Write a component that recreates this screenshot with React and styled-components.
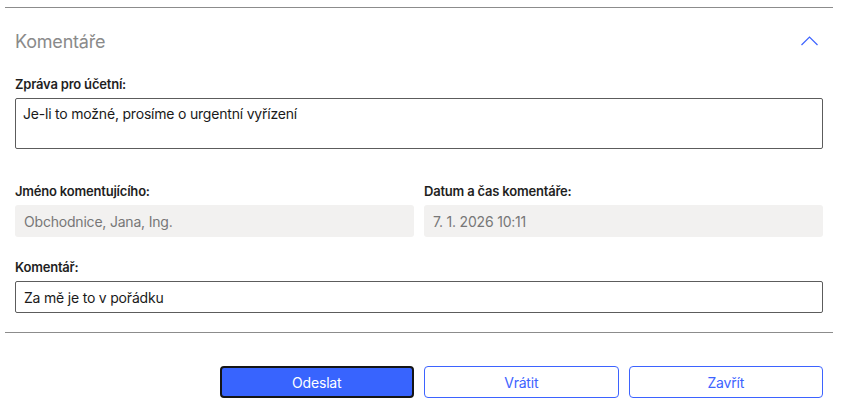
import React from "react";
import styled, { createGlobalStyle } from "styled-components";

const GlobalStyle = createGlobalStyle`
  html, body {
    margin: 0;
    padding: 0;
    background: #ffffff;
  }
  body {
    font-family: Inter, "Liberation Sans", Arial, sans-serif;
    color: #1a1a1a;
  }
`;

const ChevronUp = () => (
  <svg width="17" height="10" viewBox="0 0 17 10" fill="none">
    <polyline
      points="0.5,9 8.5,1 16.5,9"
      stroke="#3d63ff"
      strokeWidth="1.2"
      fill="none"
    />
  </svg>
);

const App = () => {
  return (
    <Page>
      <GlobalStyle />
      <Section>
        <Header>
          <Title>Komentáře</Title>
          <Toggle type="button" aria-label="Sbalit">
            <ChevronUp />
          </Toggle>
        </Header>

        <Field>
          <Label>Zpráva pro účetní:</Label>
          <TextArea defaultValue="Je-li to možné, prosíme o urgentní vyřízení" />
        </Field>

        <Columns>
          <Field>
            <Label>Jméno komentujícího:</Label>
            <ReadOnly>Obchodnice, Jana, Ing.</ReadOnly>
          </Field>
          <Field>
            <Label>Datum a čas komentáře:</Label>
            <ReadOnly>7. 1. 2026 10:11</ReadOnly>
          </Field>
        </Columns>

        <Field $gap={22}>
          <Label>Komentář:</Label>
          <Input defaultValue="Za mě je to v pořádku" />
        </Field>
      </Section>

      <Footer>
        <Button $primary>Odeslat</Button>
        <Button>Vrátit</Button>
        <Button>Zavřít</Button>
      </Footer>
    </Page>
  );
};

export default App;

const Page = styled.div`
  padding: 7px 9px 0 5px;
`;

const Section = styled.section`
  border-top: 1px solid #8c8c8c;
  padding: 22px 10px 19px;
`;

const Header = styled.div`
  display: flex;
  align-items: center;
  justify-content: space-between;
  height: 24px;
  margin-bottom: 22px;
`;

const Title = styled.h2`
  margin: 0;
  font-size: 18px;
  font-weight: 400;
  line-height: 24px;
  letter-spacing: -0.2px;
  color: #8a8a8a;
`;

const Toggle = styled.button`
  display: flex;
  align-items: center;
  justify-content: center;
  border: none;
  background: none;
  padding: 0;
  margin-right: 5px;
  margin-top: -2px;
  cursor: pointer;
`;

const Field = styled.div`
  display: flex;
  flex-direction: column;
  gap: 6px;
  margin-top: ${(p) => (p.$gap ? `${p.$gap}px` : "0")};
`;

const Label = styled.label`
  font-size: 13px;
  line-height: 16px;
  font-weight: 600;
  letter-spacing: -0.2px;
  color: #1f1f1f;
`;

const TextArea = styled.textarea`
  box-sizing: border-box;
  height: 51px;
  resize: none;
  border: 1px solid #5c5c5c;
  border-radius: 2px;
  padding: 6px 7px;
  font-family: inherit;
  font-size: 14px;
  line-height: 18px;
  letter-spacing: -0.2px;
  color: #1a1a1a;
  outline: none;
`;

const Columns = styled.div`
  display: grid;
  grid-template-columns: 1fr 1fr;
  gap: 10px;
  margin-top: 34px;
`;

const ReadOnly = styled.div`
  box-sizing: border-box;
  height: 32px;
  display: flex;
  align-items: center;
  padding: 0 9px;
  background: #f2f1f0;
  border-radius: 3px;
  font-size: 14px;
  letter-spacing: -0.2px;
  color: #777777;
`;

const Input = styled.input`
  box-sizing: border-box;
  height: 32px;
  border: 1px solid #5c5c5c;
  border-radius: 2px;
  padding: 0 8px;
  font-family: inherit;
  font-size: 14px;
  letter-spacing: -0.2px;
  color: #1a1a1a;
  outline: none;
`;

const Footer = styled.div`
  border-top: 1px solid #8c8c8c;
  display: grid;
  grid-template-columns: repeat(4, 1fr);
  gap: 10px;
  padding: 33px 10px 0;

  & > :first-child {
    grid-column: 2;
  }
`;

const Button = styled.button`
  box-sizing: border-box;
  height: 32px;
  border-radius: 4px;
  font-family: inherit;
  font-size: 14px;
  letter-spacing: -0.2px;
  cursor: pointer;
  background: ${(p) => (p.$primary ? "#3864fe" : "#ffffff")};
  color: ${(p) => (p.$primary ? "#ffffff" : "#3d63ff")};
  border: ${(p) => (p.$primary ? "2px solid #151515" : "1px solid #3d63ff")};
`;
